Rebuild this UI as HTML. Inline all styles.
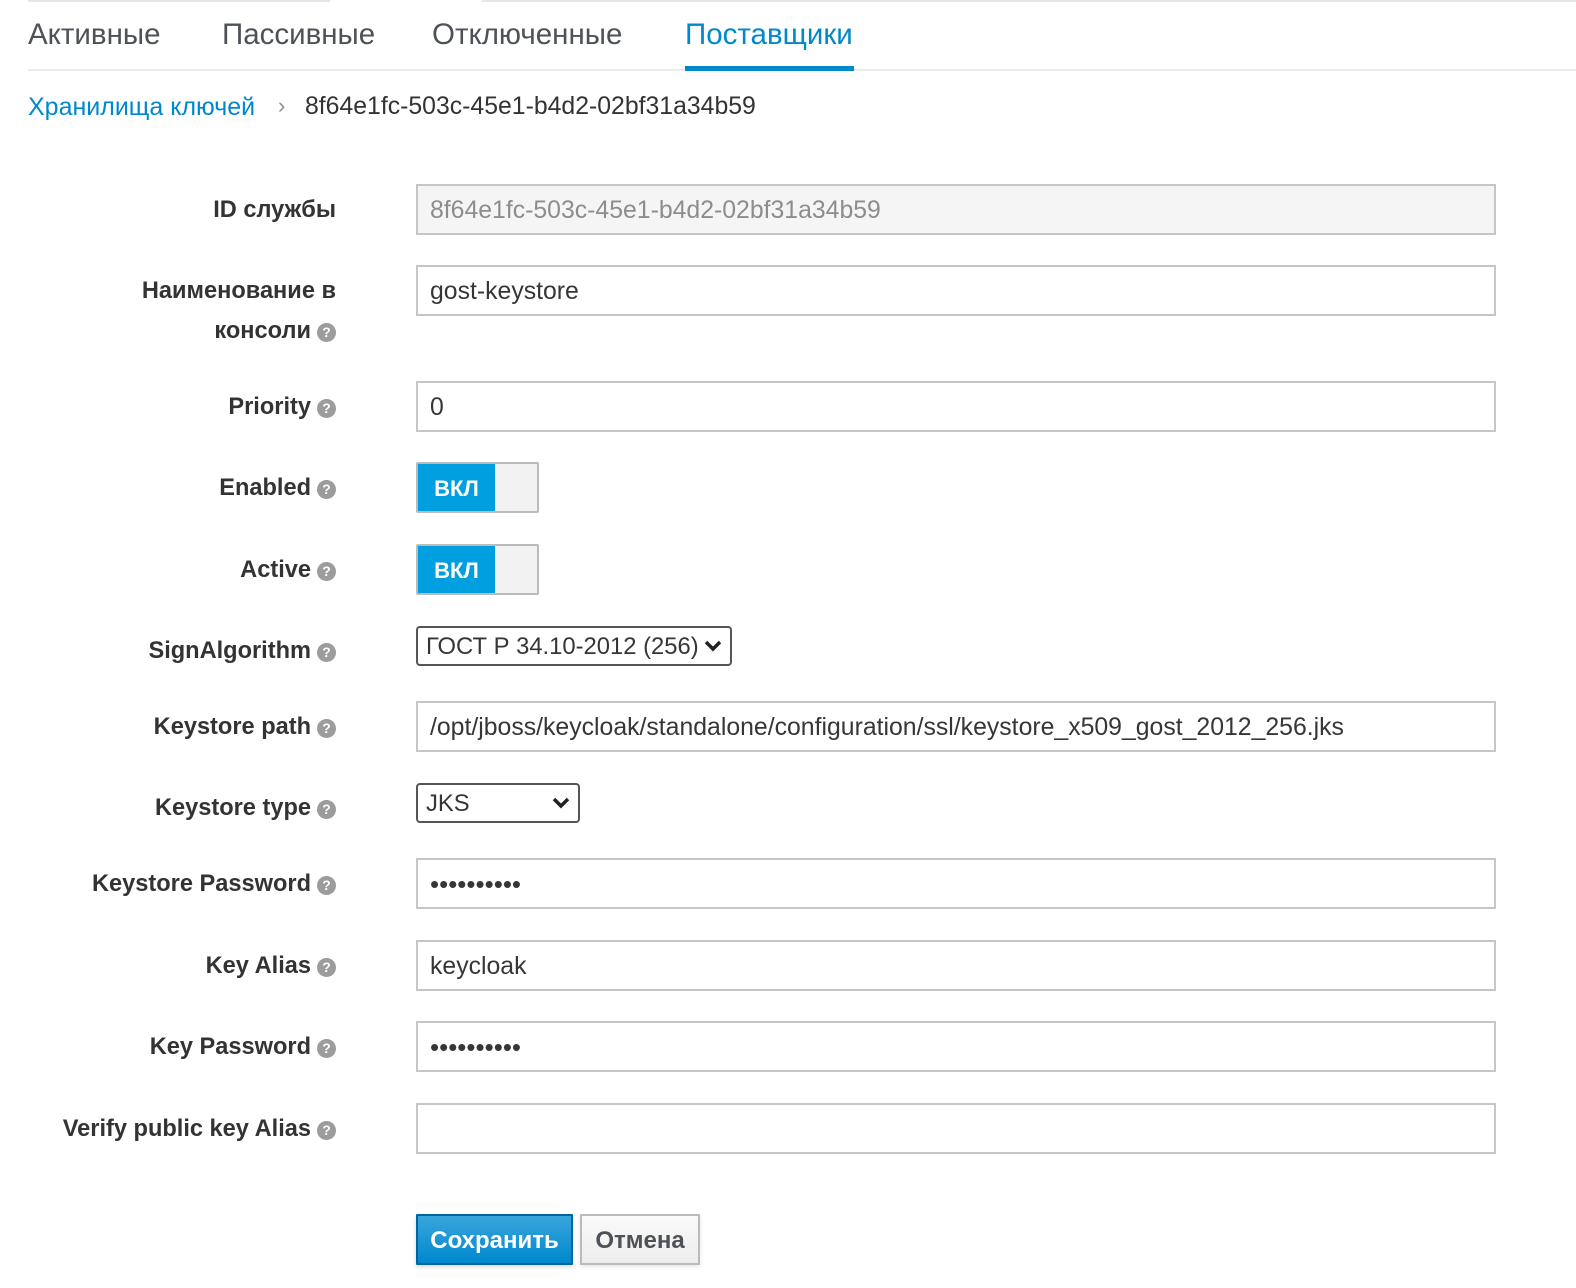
<!DOCTYPE html>
<html><head><meta charset="utf-8"><style>
*{box-sizing:border-box;margin:0;padding:0}
body{width:1576px;height:1288px;background:#fff;font-family:"Liberation Sans","DejaVu Sans",sans-serif;position:relative;overflow:hidden;color:#363636}
.a{position:absolute}
.tab{position:absolute;top:18px;font-size:29.5px;color:#4d5258;white-space:nowrap}
.lbl{position:absolute;right:1240px;font-size:23.6px;font-weight:bold;color:#333;white-space:nowrap;text-align:right;line-height:40px}
.lbl i{display:inline-block;width:19px;height:19px;border-radius:50%;background:#9c9c9c;color:#fff;font-style:normal;font-size:14px;line-height:19px;text-align:center;vertical-align:1px;margin-left:6px;font-weight:bold}
.inp{position:absolute;left:416px;width:1080px;height:51px;border:2px solid #c6c6c6;background:#fff;font-size:24.8px;color:#363636;padding-left:12px;line-height:50px;white-space:nowrap}
.pw{font-size:26px;line-height:48px}
.tog{position:absolute;left:416px;width:123px;height:51px;border:2px solid #bbb;border-radius:2px;background:#f2f2f2;overflow:hidden}
.tog b{position:absolute;left:0;top:0;width:77px;height:47px;background:#00a0e0;color:#fff;font-size:22px;line-height:49px;text-align:center}
.sel{position:absolute;left:416px;height:40px;border:2px solid #555;border-radius:4px;background:#fff;font-size:23.8px;line-height:38px;padding-left:8px;white-space:nowrap}
.sel svg{position:absolute;right:8px;top:12px}
</style></head><body>
<div class="a" style="left:28px;top:0;width:302px;height:2px;background:#e6e6e6"></div>
<div class="a" style="left:482px;top:0;width:1094px;height:2px;background:#e6e6e6"></div>
<div class="tab" style="left:28px">Активные</div>
<div class="tab" style="left:222px">Пассивные</div>
<div class="tab" style="left:432px">Отключенные</div>
<div class="tab" style="left:685px;color:#0088ce">Поставщики</div>
<div class="a" style="left:28px;top:69px;width:1548px;height:2px;background:#ececec"></div>
<div class="a" style="left:685px;top:66px;width:169px;height:5px;background:#0088ce"></div>
<div class="a" style="left:28px;top:93px;font-size:25px;color:#0088ce;white-space:nowrap">Хранилища ключей</div>
<div class="a" style="left:278px;top:93px;font-size:22px;color:#8b8d8f">›</div>
<div class="a" style="left:305px;top:93px;font-size:24.8px;color:#333;white-space:nowrap">8f64e1fc-503c-45e1-b4d2-02bf31a34b59</div>

<div class="lbl" style="top:190px">ID службы</div>
<div class="inp" style="top:184px;background:#f5f5f5;color:#8b8d8f">8f64e1fc-503c-45e1-b4d2-02bf31a34b59</div>

<div class="lbl" style="top:271px;line-height:40px">Наименование в<br>консоли<i>?</i></div>
<div class="inp" style="top:265px">gost-keystore</div>

<div class="lbl" style="top:387px">Priority<i>?</i></div>
<div class="inp" style="top:381px">0</div>

<div class="lbl" style="top:468px">Enabled<i>?</i></div>
<div class="tog" style="top:462px"><b>ВКЛ</b></div>

<div class="lbl" style="top:550px">Active<i>?</i></div>
<div class="tog" style="top:544px"><b>ВКЛ</b></div>

<div class="lbl" style="top:631px">SignAlgorithm<i>?</i></div>
<div class="sel" style="top:626px;width:316px">ГОСТ Р 34.10-2012 (256)<svg width="18" height="12" viewBox="0 0 18 12"><path d="M2 2l7 7 7-7" stroke="#222" stroke-width="3.5" fill="none"/></svg></div>

<div class="lbl" style="top:707px">Keystore path<i>?</i></div>
<div class="inp" style="top:701px">/opt/jboss/keycloak/standalone/configuration/ssl/keystore_x509_gost_2012_256.jks</div>

<div class="lbl" style="top:788px">Keystore type<i>?</i></div>
<div class="sel" style="top:783px;width:164px">JKS<svg width="18" height="12" viewBox="0 0 18 12"><path d="M2 2l7 7 7-7" stroke="#222" stroke-width="3.5" fill="none"/></svg></div>

<div class="lbl" style="top:864px">Keystore Password<i>?</i></div>
<div class="inp pw" style="top:858px">••••••••••</div>

<div class="lbl" style="top:946px">Key Alias<i>?</i></div>
<div class="inp" style="top:940px">keycloak</div>

<div class="lbl" style="top:1027px">Key Password<i>?</i></div>
<div class="inp pw" style="top:1021px">••••••••••</div>

<div class="lbl" style="top:1109px">Verify public key Alias<i>?</i></div>
<div class="inp" style="top:1103px"></div>

<div class="a" style="left:416px;top:1214px;width:157px;height:51px;background:linear-gradient(#39a5dc,#0088ce);border:2px solid #00659c;border-radius:1px;color:#fff;font-size:24px;font-weight:bold;text-align:center;line-height:49px;box-shadow:0 2px 4px rgba(0,0,0,.15)">Сохранить</div>
<div class="a" style="left:580px;top:1214px;width:120px;height:51px;background:linear-gradient(#fafafa,#ededed);border:2px solid #bbb;border-radius:1px;color:#4d5258;font-size:24px;font-weight:bold;text-align:center;line-height:49px;box-shadow:0 2px 4px rgba(0,0,0,.1)">Отмена</div>
</body></html>
